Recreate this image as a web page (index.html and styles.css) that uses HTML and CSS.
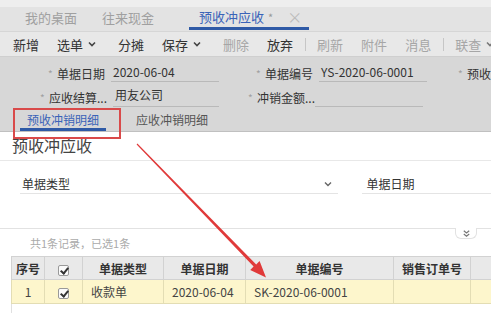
FILE: index.html
```html
<!DOCTYPE html>
<html lang="zh">
<head>
<meta charset="utf-8">
<link rel="stylesheet" href="styles.css">
</head>
<body>
<div class="page">
  <div class="topstrip"></div>
  <div class="tabs">
    <span class="tab t1">我的桌面</span>
    <span class="tab t2">往来现金</span>
    <span class="tab active">预收冲应收<span class="star">*</span><span class="close">×</span></span>
  </div>
  <div class="toolbar">
    <span class="btn">新增</span>
    <span class="btn">选单<svg class="chev" viewBox="0 0 8 6"><path d="M1 1.5 L4 4.5 L7 1.5" /></svg></span>
    <span class="btn">分摊</span>
    <span class="btn">保存<svg class="chev" viewBox="0 0 8 6"><path d="M1 1.5 L4 4.5 L7 1.5" /></svg></span>
    <span class="btn dis">删除</span>
    <span class="btn">放弃</span>
    <span class="sep"></span>
    <span class="btn dis">刷新</span>
    <span class="btn dis">附件</span>
    <span class="btn dis">消息</span>
    <span class="sep"></span>
    <span class="btn dis">联查<svg class="chev" viewBox="0 0 8 6"><path d="M1 1.5 L4 4.5 L7 1.5" /></svg></span>
  </div>
  <div class="form">
    <div class="frow r1">
      <div class="field f1"><span class="req">*</span><span class="lbl">单据日期</span><span class="val">2020-06-04</span></div>
      <div class="field f2"><span class="req">*</span><span class="lbl">单据编号</span><span class="val">YS-2020-06-0001</span></div>
      <div class="field f3"><span class="req">*</span><span class="lbl">预收</span></div>
    </div>
    <div class="frow r2">
      <div class="field g1"><span class="req">*</span><span class="lbl">应收结算...</span><span class="val">用友公司</span></div>
      <div class="field g2"><span class="req">*</span><span class="lbl">冲销金额...</span><span class="val"></span></div>
    </div>
  </div>
  <div class="subtabs">
    <span class="stab sactive">预收冲销明细</span>
    <span class="stab">应收冲销明细</span>
    <div class="redbox"></div>
  </div>
  <div class="content">
    <div class="title">预收冲应收</div>
    <div class="filters">
      <div class="ffield sel"><span>单据类型</span><svg class="chev2" viewBox="0 0 8 6"><path d="M1 1.5 L4 4.5 L7 1.5" /></svg></div>
      <div class="ffield date"><span>单据日期</span></div>
    </div>
    <div class="notchwrap">
      <div class="notch"><svg viewBox="0 0 10 10"><path d="M2 2 L5 4.5 L8 2 M2 5.5 L5 8 L8 5.5" /></svg></div>
    </div>
    <div class="count">共1条记录，已选1条</div>
    <table class="grid">
      <colgroup>
        <col class="c1"><col class="c2"><col class="c3"><col class="c4"><col class="c5"><col class="c6"><col class="c7">
      </colgroup>
      <thead>
        <tr><th>序号</th><th><span class="cb"></span></th><th>单据类型</th><th>单据日期</th><th>单据编号</th><th>销售订单号</th><th></th></tr>
      </thead>
      <tbody>
        <tr><td class="ctr">1</td><td class="ctr"><span class="cb"></span></td><td>收款单</td><td>2020-06-04</td><td>SK-2020-06-0001</td><td></td><td></td></tr>
      </tbody>
    </table>
    <div class="below"></div>
  </div>
  <svg class="arrow" viewBox="0 0 491 313" width="491" height="313">
    <polygon points="137.4,143.6 256.2,264.4 259.6,261.0 266,277.5 250.2,270.0 253.6,266.6 136.6,144.4" />
  </svg>
</div>
</body>
</html>
```

FILE: styles.css
```css
* { box-sizing: border-box; }
html, body { margin: 0; padding: 0; }
body {
  font-family: "Noto Sans CJK SC", "Liberation Sans", sans-serif;
  color: #333;
  background: #fff;
}
.page {
  position: relative;
  width: 491px;
  height: 313px;
  overflow: hidden;
}
.topstrip {
  height: 7px;
  background: #eeeeee;
}
.tabs {
  height: 24px;
  background: #e3e3e3;
  display: flex;
  align-items: stretch;
  font-size: 13px;
  line-height: 20px;
  white-space: nowrap;
  padding-bottom: 1px;
}
.tab {
  color: #a0a0a0;
  display: flex;
  align-items: center;
  flex-shrink: 0;
  padding-bottom: 2px;
}
.t1 { margin-left: 25px; }
.t2 { margin-left: 25px; }
.active {
  margin-left: 35px;
  padding: 0 10px 0 10px;
  color: #3a63b8;
  border-bottom: 3px solid #2f5aa6;
  width: 120px;
}
.star { color: #999; font-size: 11px; margin-left: 4px; }
.close { color: #bbb; font-size: 15px; margin-left: 14px; }
.toolbar {
  height: 26px;
  background: #e8e8e8;
  border-top: 1px solid #d6d6d6;
  border-bottom: 1px solid #cfcfcf;
  display: flex;
  align-items: center;
  padding-left: 4px;
  font-size: 13px;
  white-space: nowrap;
}
.btn {
  display: flex;
  align-items: center;
  padding: 0 9px;
  color: #333;
  flex-shrink: 0;
}
.btn.dis { color: #a6a6a6; }
.chev {
  width: 8px;
  height: 6px;
  margin-left: 5px;
  margin-right: 4px;
  fill: none;
  stroke: #444;
  stroke-width: 1.6;
  flex-shrink: 0;
}
.btn.dis .chev { stroke: #777; }
.sep {
  width: 1px;
  height: 13px;
  margin: 0 2px 0 3px;
  background: #c6c6c6;
  flex-shrink: 0;
}
.form {
  height: 51px;
  background: #d7d7d7;
  padding-top: 7px;
  font-size: 12px;
  white-space: nowrap;
}
.frow {
  display: flex;
  height: 23px;
  align-items: flex-start;
}
.r1 { padding-left: 48px; }
.r2 { padding-left: 40px; }
.field {
  display: flex;
  align-items: center;
  height: 18px;
  color: #333;
  flex-shrink: 0;
}
.req { color: #a0a0a0; font-size: 10px; width: 9px; }
.lbl { color: #333; }
.val {
  margin-left: 6px;
  height: 18px;
  line-height: 16px;
  border-bottom: 1px solid #b9b9b9;
  padding-left: 2px;
}
.f1 { width: 208px; }
.f1 .val { width: 108px; }
.f2 { width: 202px; }
.f2 .val { width: 108px; }
.r2 .field { height: 20px; }
.g1 { width: 208px; }
.g1 .val { width: 106px; height: 20px; }
.g2 .val { width: 108px; height: 20px; margin-left: 0; }
.subtabs {
  position: relative;
  height: 24px;
  background: #d7d7d7;
  border-bottom: 1px solid #c0c0c0;
  display: flex;
  align-items: stretch;
  font-size: 12px;
  white-space: nowrap;
}
.stab {
  display: flex;
  align-items: center;
  color: #555;
  padding: 0 8px;
  margin-left: 22px;
}
.sactive {
  margin-left: 20px;
  padding: 0 7px;
  color: #3a63b8;
  border-bottom: 3px solid #2f5aa6;
  padding-top: 3px;
}
.redbox {
  position: absolute;
  left: 13px;
  top: 0px;
  width: 108px;
  height: 31px;
  border: 2px solid #d94a4a;
}
.content { background: #fff; }
.title {
  height: 29px;
  font-size: 16px;
  line-height: 26px;
  padding-left: 12px;
  color: #444;
  border-bottom: 1px solid #e8e8e8;
}
.filters {
  display: flex;
  height: 68px;
  padding-top: 13px;
  border-bottom: 1px solid #e2e2e2;
  font-size: 12px;
}
.ffield {
  height: 20px;
  display: flex;
  align-items: center;
  justify-content: space-between;
  border-bottom: 1px solid #e4e4e4;
  color: #333;
}
.sel { margin-left: 20px; width: 322px; padding-left: 2px; padding-right: 6px; }
.date { margin-left: 24px; width: 130px; padding-left: 4px; }
.chev2 {
  width: 8px;
  height: 6px;
  fill: none;
  stroke: #666;
  stroke-width: 1.4;
}
.notchwrap {
  height: 0;
  position: relative;
}
.notch {
  position: absolute;
  left: 455px;
  top: -1px;
  width: 22px;
  height: 11px;
  background: #fff;
  border: 1px solid #e2e2e2;
  border-top: none;
  border-radius: 0 0 6px 6px;
  display: flex;
  justify-content: center;
  align-items: center;
}
.notch svg {
  width: 9px;
  height: 9px;
  fill: none;
  stroke: #777;
  stroke-width: 1.3;
}
.count {
  height: 27px;
  padding-left: 30px;
  padding-top: 7px;
  font-size: 11px;
  line-height: 14px;
  color: #aaa;
}
.grid {
  margin-left: 11px;
  border-collapse: collapse;
  table-layout: fixed;
  width: 500px;
  font-size: 12px;
}
.c1 { width: 33px; }
.c2 { width: 38px; }
.c3 { width: 81px; }
.c4 { width: 82px; }
.c5 { width: 148px; }
.c6 { width: 77px; }
.c7 { width: 41px; }
.grid th {
  height: 23px;
  background: #e9e9e9;
  border: 1px solid #d2d2d2;
  font-weight: bold;
  color: #333;
  padding: 0;
  text-align: center;
}
.grid td {
  height: 24px;
  background: #fdf6cc;
  border: 1px solid #e3ddb4;
  padding: 0 0 0 8px;
  color: #444;
  white-space: nowrap;
}
.grid td.ctr { text-align: center; padding: 0; }
.cb {
  display: inline-block;
  width: 11px;
  height: 11px;
  border: 1px solid #999;
  border-radius: 2px;
  background: #fafafa;
  vertical-align: middle;
  position: relative;
}
.cb::after {
  content: "";
  position: absolute;
  left: 3px;
  top: 0px;
  width: 3px;
  height: 6px;
  border: solid #333;
  border-width: 0 2px 2px 0;
  transform: rotate(40deg);
}
.below {
  margin-left: 11px;
  height: 20px;
  border-left: 1px solid #e0e0e0;
}
.arrow {
  position: absolute;
  left: 0;
  top: 0;
  pointer-events: none;
}
.arrow polygon { fill: #e03a3a; }
```
